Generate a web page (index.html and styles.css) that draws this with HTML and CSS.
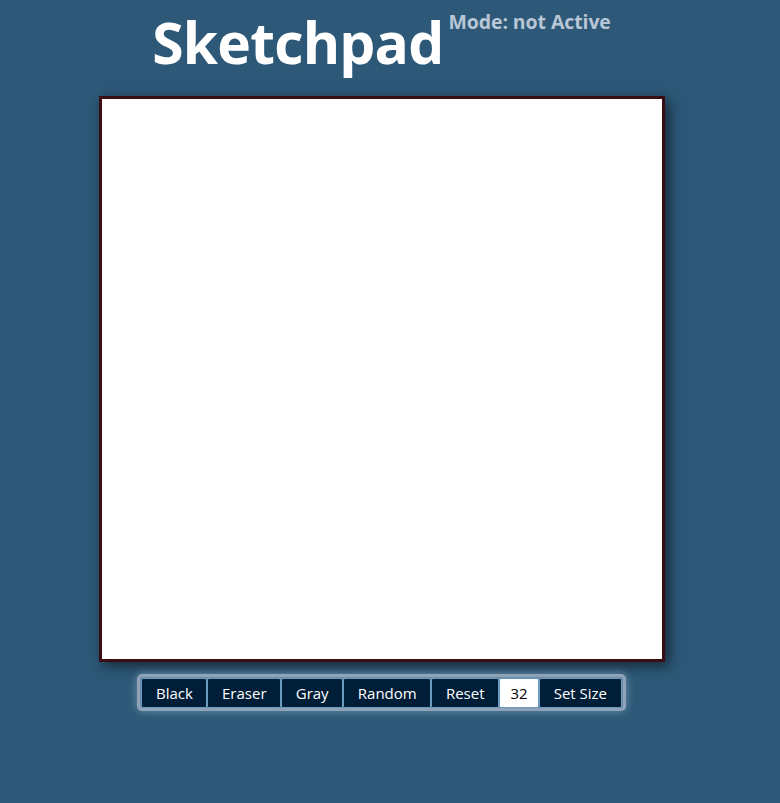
FILE: index.html
```html
<!DOCTYPE html>
<html lang="en">
<head>
<meta charset="utf-8">
<title>Sketchpad</title>
<link rel="stylesheet" href="styles.css">
</head>
<body>
<div class="page">
  <header class="header">
    <h1 class="title">Sketchpad</h1>
    <span class="mode">Mode: not Active</span>
  </header>
  <div class="pad"></div>
  <div class="controls">
    <button class="btn">Black</button>
    <button class="btn">Eraser</button>
    <button class="btn">Gray</button>
    <button class="btn">Random</button>
    <button class="btn">Reset</button>
    <input class="size" type="text" value="32">
    <button class="btn">Set Size</button>
  </div>
</div>
</body>
</html>
```
FILE: styles.css
```css
html, body {
  margin: 0;
  padding: 0;
  background: #2d5877;
  height: 100%;
}
body {
  font-family: "Open Sans", "Noto Sans", sans-serif;
}
.page {
  display: flex;
  flex-direction: column;
  align-items: center;
  padding-right: 17px;
}
.header {
  display: flex;
  align-items: flex-start;
  height: 96px;
}
.title {
  margin: 0;
  font-size: 57px;
  font-weight: 700;
  color: #ffffff;
  line-height: 1;
  padding-top: 14px;
  letter-spacing: -0.8px;
}
.mode {
  font-size: 19.5px;
  font-weight: 700;
  color: #b9c6d6;
  margin-left: 5px;
  margin-top: 8px;
  letter-spacing: -0.1px;
}
.pad {
  width: 560px;
  height: 560px;
  background: #ffffff;
  border: 3px solid #3a0c14;
  box-shadow: 4px 4px 12px rgba(0, 0, 0, 0.55);
}
.controls {
  display: flex;
  margin-top: 12px;
  padding: 1px 1px 0 1px;
  border: 3px solid #8fa3b8;
  border-radius: 5px;
  box-shadow: 0 0 10px rgba(190, 215, 240, 0.45);
  background: #6f8aa3;
}
.btn {
  height: 30px;
  padding: 0 13.6px;
  background: #011e38;
  color: #ffffff;
  font-family: "Open Sans", "Noto Sans", sans-serif;
  font-size: 15px;
  border: 1px solid #6d9cc3;
  border-radius: 2px;
  margin: 0;
}
.size {
  width: 40px;
  height: 30px;
  box-sizing: border-box;
  padding: 0;
  text-align: center;
  font-family: "Open Sans", "Noto Sans", sans-serif;
  font-size: 15px;
  color: #000;
  background: #fff;
  border: 1px solid #6d9cc3;
  border-radius: 2px;
  margin: 0;
}
```
